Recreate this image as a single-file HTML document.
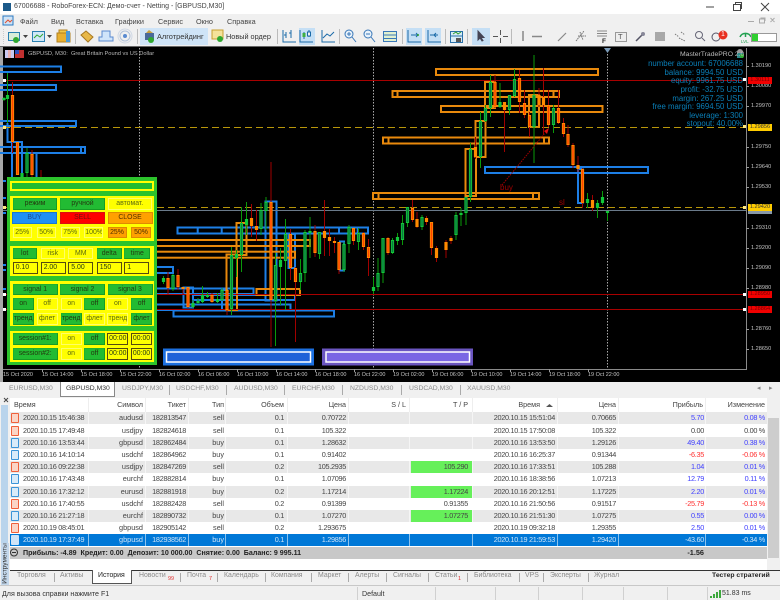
<!DOCTYPE html>
<html><head><meta charset="utf-8"><style>
html,body{margin:0;padding:0;width:780px;height:600px;overflow:hidden;background:#f0f0f0}
#w{position:relative;width:780px;height:600px;overflow:hidden;font:8px "Liberation Sans","Noto Sans CJK SC",sans-serif;color:#333;filter:blur(.35px)}
.a,.t{position:absolute;white-space:nowrap}
.t{line-height:10px}
svg{position:absolute;left:0;top:0}
.m{top:17px;color:#444;font-size:7.3px}
.p{left:751px;color:#c4c4c4;font-size:5.6px;line-height:8px}
.x{color:#c4c4c4;font-size:5.5px;top:371px;line-height:8px}
.tg{left:748px;width:24px;height:7px;font-size:5.6px;line-height:7px;color:#333;text-align:center}
.inf{right:37px;color:#0a7fb8;font-size:7.800px;line-height:9px}
.b{position:absolute;text-align:center;font-size:6.9px;color:#243a10;box-sizing:border-box;white-space:nowrap;overflow:hidden}
.g{background:#22bb33;border:1px solid #1eb02e;border-right-color:#169c25;border-bottom-color:#169c25}
.y{background:#ffff00;border:1px solid #ffff66;color:#5a6a10}
.o{background:#ffa000;border:1px solid #e08a00;color:#503000}
.n{background:#ffff00;border:1px solid #554a10;text-align:left;padding-left:2px}
.s{position:absolute;background:#ffff00}
.tb{top:384px;color:#8a8a8a;font-size:6.8px}
.r{position:absolute;left:10px;width:757px;height:12.2px;line-height:12.2px;font-size:7.3px;letter-spacing:-.3px;color:#444}
.r.e{background:#e8e8e8}.r.w{background:#fff}
.r.z{background:#0078d7;color:#cfe4f7}
.r span{position:absolute;white-space:nowrap}
.r span:nth-of-type(1){left:13px}
.r span:nth-of-type(2){right:624px;letter-spacing:0}
.r span:nth-of-type(3){right:581px}
.r span:nth-of-type(4){right:543px;letter-spacing:0}
.r span:nth-of-type(5){right:483px}
.r span:nth-of-type(6){right:421px}
.r span:nth-of-type(7){left:401px;text-align:right;padding-right:4px;width:57px;height:12.2px}
.r span:nth-of-type(8){right:212px}
.r span:nth-of-type(9){right:151px}
.r span:nth-of-type(10){right:63px;color:#3f3fff}
.r span:nth-of-type(11){right:2px;color:#3f3fff}
.r span.c{color:#444}.r span.h{color:#ff3030}
.r.z span:nth-of-type(n){color:#cfe4f7}
.r span.gr{background:#66f05a}
.r u{position:absolute;left:1px;top:1px;width:8px;height:10px;border:1px solid;box-sizing:border-box;text-decoration:none;border-radius:1px}
.r u.d{border-color:#f0603a;background:#fbd5c6}.r u.l{border-color:#3a94d8;background:#d8ebf9}
.hd{top:400px;color:#444;font-size:7.2px}
.bt{top:571px;color:#8a8a8a;font-size:6.9px}
.sep{position:absolute;width:1px;background:#aaa}
</style></head><body><div id="w">

<!-- title -->
<div class="a" style="left:0;top:0;width:780px;height:14px;background:#fff"></div>
<div class="a" style="left:3px;top:3px;width:8px;height:8px;background:#1c5a8a"></div>
<div class="t" style="left:14px;top:2px;font-size:7px;color:#444">67006688 - RoboForex-ECN: Демо-счет - Netting - [GBPUSD,M30]</div>
<svg width="780" height="46" fill="none" stroke="#444" stroke-width="1">
<path d="M706 7h8"/><path d="M733.500 4.500h7v6h-7zM735.500 4.500v-2h6v6h-1"/><path d="M761 3l8 8M769 3l-8 8"/>
<path d="M748 21.500h6M759.500 19h5v4h-5zM761 19v-1h4v3M770.500 18l4 4M774.500 18l-4 4" stroke="#aaa"/>
<rect x="3" y="16" width="10" height="9" stroke="#2a78c0" fill="#cfe4f7"/><path d="M5 23l3-3 2 2 2-2" stroke="#e05030"/>
<path d="M75.500 29v15M137.500 29v15M277.500 29v15M339.500 29v15M402.500 29v15M445.500 29v15M467.500 29v15M511.500 29v15" stroke="#bbb"/>
<path d="M3.500 29v15" stroke="#ccc" stroke-dasharray="1 1"/>
</svg>
<div class="t m" style="left:20px">Файл</div><div class="t m" style="left:51px">Вид</div><div class="t m" style="left:76px">Вставка</div><div class="t m" style="left:115px">Графики</div><div class="t m" style="left:158px">Сервис</div><div class="t m" style="left:196px">Окно</div><div class="t m" style="left:227px">Справка</div>

<!-- toolbar buttons -->
<div class="a" style="left:140px;top:28px;width:68px;height:17px;background:#cfe4f7"></div>
<div class="a" style="left:299px;top:28px;width:16px;height:17px;background:#c5dff5"></div>
<div class="a" style="left:406px;top:28px;width:16px;height:17px;background:#c5dff5"></div>
<div class="a" style="left:425px;top:28px;width:16px;height:17px;background:#c5dff5"></div>
<div class="a" style="left:472px;top:28px;width:18px;height:17px;background:#c5dff5"></div>
<div class="t" style="left:157px;top:32px;font-size:7.400px;color:#333">Алготрейдинг</div>
<div class="t" style="left:226px;top:32px;font-size:7.300px;color:#333">Новый ордер</div>
<svg width="780" height="46" fill="none" stroke-width="1">
<rect x="8.500" y="32.500" width="11" height="8" fill="#d8ecd8" stroke="#2a80b0"/><circle cx="16" cy="40" r="3" fill="#30a830"/>
<path d="M23 35h5l-2.500 3z" fill="#444"/>
<rect x="32.500" y="31.500" width="12" height="10" fill="#cfe8f8" stroke="#2a80b0"/><path d="M34 38l3-3 3 2 3-3" stroke="#30a830"/>
<path d="M47 35h5l-2.500 3z" fill="#444"/>
<rect x="59" y="30" width="8" height="7" fill="#f0c848" stroke="#b08020"/><rect x="57" y="33" width="13" height="9" fill="#e8b030" stroke="#b08020"/><rect x="66" y="31" width="4" height="11" fill="#4a9ad8"/>
<path d="M81 35l5-4 7 6-5 5z" fill="#e8b848" stroke="#a87820"/>
<path d="M102 37v-6h8v6h3v4h-14v-4z" fill="#cfe4fa" stroke="#5a8ad0"/>
<circle cx="125" cy="36" r="2" fill="#5a8ad0"/><circle cx="125" cy="36" r="5" stroke="#b0c0d8"/><circle cx="125" cy="36" r="7" stroke="#d0d8e4"/>
<rect x="145" y="33" width="9" height="7" fill="#4a6a9a"/><path d="M146 33l3-3 4 3z" fill="#c8a040"/><circle cx="151" cy="40" r="3" fill="#30a830"/>
<rect x="212" y="30" width="11" height="9" fill="#f5e29a" stroke="#c8a030"/><circle cx="220" cy="39" r="3" fill="#30a830"/>
<path d="M283 30v12h13M286 32v6M291 30v8M289 33h2M284 35h2" stroke="#1a6aa8"/>
<path d="M300 30v12h13M304 32v7M309 30v7" stroke="#1a6aa8"/><rect x="302.500" y="33" width="3" height="4" fill="#40b040"/><rect x="307.500" y="32" width="3" height="4" fill="#f0f0f0" stroke="#1a6aa8"/>
<path d="M322 30v12h13M323 38l4-4 3 2 4-4" stroke="#1a6aa8"/>
<circle cx="349" cy="34" r="4" fill="#e8f2fb" stroke="#3a78b8"/><path d="M352 37l4 5M347 34h4M349 32v4" stroke="#3a78b8"/>
<circle cx="368" cy="34" r="4" fill="#e8f2fb" stroke="#3a78b8"/><path d="M371 37l4 5M366 34h4" stroke="#3a78b8"/>
<rect x="383.500" y="31.500" width="13" height="10" fill="#e0f0d0" stroke="#3a78b8"/><path d="M384 35h12M384 38.500h12" stroke="#3a78b8"/>
<path d="M408 30v12h13M411 35h7M416 33l2 2-2 2" stroke="#1a6aa8"/><circle cx="418" cy="35" r="1" fill="#30a030"/>
<path d="M428 30v12h13M430 35h8M436 33l-2 2 2 2" stroke="#1a6aa8"/>
<rect x="450.500" y="31.500" width="12" height="11" fill="#d8ecf8" stroke="#2a70a8"/><path d="M451 36h11" stroke="#2a70a8"/><path d="M453 34l3-2 2 2 3-2" stroke="#30a030"/><rect x="456" y="38" width="5" height="4" fill="#555"/>
<path d="M478 31v9l2-2 2 3 1-.5-2-3h3z" fill="#445" stroke="#445"/>
<path d="M500.500 30v5M500.500 38v5M493 36.500h5M503 36.500h5" stroke="#555"/>
<path d="M523 31v10" stroke="#888" stroke-width="1.500"/><path d="M542 36.500h-10" stroke="#888" stroke-width="1.500"/><path d="M558 41l8-8" stroke="#888" stroke-width="1.200"/>
<path d="M576 41l8-10M578 36l8 0M580 32l3 8" stroke="#777" stroke-dasharray="1.500 .7"/>
<path d="M597 31h10M597 33.500h10M597 36h10" stroke="#888"/>
<rect x="615.500" y="32.500" width="11" height="9" fill="#eee" stroke="#999"/>
<path d="M636 41l6-6" stroke="#556" stroke-width="1.500"/><circle cx="643" cy="34" r="2" fill="#889"/>
<rect x="655" y="32" width="10" height="9" fill="#a8a8a8"/>
<path d="M675 34l4 3M681 32l4 3M679 38l6 3" stroke="#777" stroke-dasharray="1.500 1"/>
<circle cx="699" cy="35" r="3.500" stroke="#667"/><path d="M702 38l3 3" stroke="#667"/>
<circle cx="716" cy="37" r="4" stroke="#556"/><circle cx="723" cy="35" r="4.500" fill="#e83020"/>
<path d="M740 37a6 6 0 0 1 11 0" stroke="#22a050" stroke-width="1.500"/><path d="M745.500 37v-3" stroke="#22a050" stroke-width="1.500"/>
<rect x="751.500" y="33.500" width="25" height="8" fill="#fff" stroke="#999"/><rect x="752" y="34" width="6" height="7" fill="#30d030"/>
</svg>
<div class="t" style="left:721px;top:30px;font-size:7px;color:#fff">1</div>
<div class="t" style="left:741px;top:39px;font-size:4.500px;color:#22a050;line-height:5px">LVL</div>
<div class="t" style="left:602px;top:37px;font-size:6.500px;font-weight:bold;color:#222">F</div>
<div class="t" style="left:618px;top:32px;font-size:7.500px;color:#555">T</div>

<!-- chart -->
<div class="a" style="left:0;top:46px;width:780px;height:336px;background:#000"></div>
<div class="a" style="left:0;top:46px;width:2.500px;height:336px;background:#a8a8a8"></div>
<div class="a" style="left:0;top:46px;width:780px;height:1px;background:#666"></div>
<svg width="780" height="600" fill="none">
<path d="M139.500 48V369M373.500 48V369M607.500 48V369" stroke="#aaa" stroke-dasharray="1.500 1.500"/>
<g stroke="#1d7fe6" stroke-width="2">
<rect x="-5" y="66.500" width="66" height="5.500"/><rect x="-5" y="85" width="61" height="5"/><rect x="-5" y="121" width="81" height="5"/><rect x="-5" y="147" width="90" height="6"/>
<path d="M81 147v6M7.500 123V142H22V177M12 142V177M36.500 153V177M6 181h-3M6 198h-3M6 213h-3M6 265h-3M6 270h-3M6 289h-3"/>
<rect x="177.500" y="227.500" width="190.500" height="6"/><path d="M197.700 227v7M221.700 227v7M339 227v7M357.700 227v7"/>
<rect x="150" y="267" width="23" height="6"/><rect x="173.500" y="310.500" width="160.500" height="6"/><rect x="150" y="304.500" width="140.500" height="5.500"/><rect x="150" y="288.500" width="103.500" height="5.500"/>
<rect x="183.500" y="287.500" width="9.500" height="20"/><rect x="193" y="295" width="102" height="5"/><rect x="265.500" y="201.500" width="11" height="99"/><rect x="288.500" y="234" width="6.500" height="34"/><rect x="340" y="241.500" width="4" height="29"/><rect x="222" y="290" width="5" height="20"/>
<rect x="485" y="167" width="163" height="6"/><rect x="578" y="169" width="4.500" height="34"/>
</g>
<g stroke="#e8890c" stroke-width="2">
<rect x="150" y="240" width="160" height="6"/><rect x="150" y="251.700" width="145" height="6"/><rect x="236.500" y="223" width="10" height="32"/><rect x="226.500" y="254.500" width="10.500" height="55.500"/><rect x="256.500" y="289" width="43.500" height="6"/>
<rect x="373" y="193" width="166" height="6"/><path d="M378.500 193v6M533 193v6M397.500 91v6M553.500 91v6M388.500 137v7M544 137v7"/>
<rect x="436" y="69" width="162" height="6"/><rect x="392.500" y="91" width="166.500" height="6"/><rect x="441" y="106" width="161.500" height="6"/><rect x="383" y="137.500" width="166" height="6"/>
<rect x="485" y="82" width="10" height="26"/><rect x="475.500" y="121" width="10" height="36"/><rect x="465.500" y="149" width="10.500" height="47"/><rect x="529" y="95" width="10" height="32"/>
</g>
<path d="M3 80.500H746M3 294.500H746M3 309.500H746" stroke="#a80000"/>
<path d="M3 127.500H746M3 207.500H746" stroke="#b8960a" stroke-dasharray="7 4"/>
<path d="M3 210.500H746" stroke="#6a7a8a"/>
<path stroke="#0a9a0a" d="M4 97V101M7.500 73V123M22 173V177M27 148V177M163.500 276V284M173 274V291M193 300V308M198 298V304M202.500 286V303M207.500 292V298M217.500 293V303M222 288V301M231.500 247V315M236.500 250V277M241.500 207V272M246.500 202V235M261 203V235M266 197V230M275.500 253V346M280.500 248V305M285.500 219V310M300.500 259V290M305 230V282M310 217V258M319.500 232V259M344 242V272M349 225V253M358.500 228V250M373.500 277V294M378 258V291M383 238V283M392.500 238V254M397.500 233V245M402.500 215V245M407.500 207V227M422 215V230M456 212V240M461 208V226M466 197V225M470.500 143V202M480.500 112V168M485.500 105V122M490.500 75V117M500 83V108M509.500 95V115M514.500 69V97M534 55V163M553.500 105V133M587.500 193V208M597.500 200V218M602.500 191V205M607.500 211V221"/>
<path stroke="#a00000" d="M12.500 82V153M17.500 142V175M32 150V177M41 170V177M168 272V295M178 269V290M183 287V295M188 287V308M212 293V303M227 290V315M251.500 204V237M256.500 210V241M271 162V347M290.500 229V280M295.500 267V342M315 225V257M324.500 200V256M329.500 229V256M334.500 237V253M339 242V274M353.500 228V245M363.500 232V250M368.500 239V276M388 237V255M412.500 200V222M417 212V228M426.500 216V225M431.500 222V255M436.500 246V262M446 240V258M451 236V244M475.500 137V159M495 75V108M504.500 102V152M519.500 70V113M524.500 90V118M529.500 112V137M539 88V107M543.500 68V135M548.500 90V127M558.500 90V124M563.500 118V137M568 125V147M573 143V168M578 156V172M582.500 168V208M592.500 195V211"/>
<path stroke="#12c83a" stroke-width="3.200" d="M4 98V100M7.500 95V99M22 173V177M27 153V173M163.500 278V282M173 275V289M193 303V307M198 301V303M202.500 295V302M207.500 295V297M217.500 299V302M222 290V300M231.500 255V309M236.500 254V258M241.500 223V255M246.500 219V225M261 210V229M266 202V211M275.500 265V301M280.500 260V267M285.500 234V261M300.500 273V282M305 232V273M310 231V233M319.500 232V254M344 244V270M349 227V244M358.500 233V242M373.500 287V291M378 273V287M383 238V273M392.500 240V253M397.500 237V241M402.500 223V240M407.500 207V223M422 217V227M456 215V235M461 213V215M466 197V213M470.500 149V197M480.500 121V157M485.500 108V121M490.500 82V108M500 102V107M509.500 95V110M514.500 79V96M534 95V127M553.500 108V125M587.500 199V203M597.500 203V208M602.500 197V203M607.500 211V213"/>
<path stroke="#0a7a40" stroke-width="1.400" d="M27 154V172M173 276V288M222 291V299M231.500 256V308M241.500 224V254M261 211V228M266 203V210M275.500 266V300M285.500 235V260M300.500 274V281M305 233V272M319.500 233V253M344 245V269M349 228V243M358.500 234V241M378 274V286M383 239V272M392.500 241V252M402.500 224V239M407.500 208V222M422 218V226M456 216V234M466 198V212M470.500 150V196M480.500 122V156M485.500 109V120M490.500 83V107M509.500 96V109M514.500 80V95M534 96V126M553.500 109V124"/>
<path stroke="#ff8a00" stroke-width="3.200" d="M12.500 95V142M17.500 142V175M32 154V175M168 278V288M178 275V287M183 287V289M188 287V307M212 295V302M227 290V310M251.500 218V226M256.500 226V230M271 202V300M290.500 234V268M295.500 268V282M315 231V253M324.500 231V238M329.500 237V241M334.500 241V243M339 242V270M353.500 228V241M363.500 233V247M368.500 247V258M388 238V253M412.500 208V220M417 219V227M426.500 218V222M431.500 222V248M436.500 248V258M446 242V250M451 238V241M475.500 147V157M495 82V107M504.500 102V110M519.500 78V102M524.500 103V115M529.500 115V127M539 95V105M543.500 97V105M548.500 105V125M558.500 108V123M563.500 123V134M568 134V145M573 145V165M578 165V169M582.500 169V203M592.500 200V208"/>
<path stroke="#ff4400" stroke-width="1.400" d="M12.500 96V141M17.500 143V174M32 155V174M168 279V287M178 276V286M188 288V306M212 296V301M227 291V309M271 203V299M290.500 235V267M295.500 269V281M315 232V252M339 243V269M353.500 229V240M363.500 234V246M368.500 248V257M388 239V252M412.500 209V219M431.500 223V247M495 83V106M519.500 79V101M524.500 104V114M529.500 116V126M548.500 106V124M558.500 109V122M563.500 124V133M568 135V144M573 146V164M582.500 170V202"/>
<path d="M502 185L545 133" stroke="#a00000" stroke-dasharray="1.500 1"/>
<path d="M544 131l5-3-2 6z" fill="#e01010"/>
<rect x="163" y="348.500" width="151" height="17" fill="#1b6fe0"/><rect x="166.500" y="352" width="144" height="10" fill="#1f62d8" stroke="#fff" stroke-width="1.500"/>
<rect x="322" y="348.500" width="151" height="17" fill="#6a55c0"/><rect x="326" y="352" width="143.500" height="10" fill="#7a66e4" stroke="#fff" stroke-width="1.500"/>
<path d="M746.500 48V369.500H3" stroke="#8a8a8a"/>
<path d="M746 66.500h3M746 86.500h3M746 106.500h3M746 147.500h3M746 167.500h3M746 187.500h3M746 228.500h3M746 248.500h3M746 268.500h3M746 288.500h3M746 329.500h3M746 349.500h3" stroke="#999"/>
<path d="M42.500 369v3M81.500 369v3M120.500 369v3M159.500 369v3M198.500 369v3M237.500 369v3M276.500 369v3M315.500 369v3M354.500 369v3M393.500 369v3M432.500 369v3M471.500 369v3M510.500 369v3M549.500 369v3M588.500 369v3" stroke="#999"/>
<path d="M604 48h7l-3.500 5z" fill="#7a9ab8"/>
<rect x="743" y="78" width="3" height="3" fill="#fff"/><rect x="743" y="125" width="3" height="3" fill="#ffe880"/><rect x="743" y="206" width="3" height="3" fill="#ffe880"/><rect x="743" y="293" width="3" height="3" fill="#fff"/><rect x="743" y="308" width="3" height="3" fill="#fff"/>
<rect x="3" y="79" width="3" height="3" fill="#fff"/><rect x="3" y="126" width="3" height="3" fill="#ffe880"/><rect x="3" y="206" width="3" height="3" fill="#ffe880"/><rect x="3" y="293" width="3" height="3" fill="#fff"/><rect x="3" y="308" width="3" height="3" fill="#fff"/>
<rect x="5" y="50" width="9" height="8" fill="#c8c8f0"/><rect x="8" y="50" width="3" height="8" fill="#e8b0b0"/><rect x="15" y="50" width="9" height="8" fill="#c03030"/><rect x="15" y="50" width="4" height="4" fill="#3050c0"/>
<circle cx="740" cy="52" r="3" fill="#999"/><rect x="737" y="53" width="6" height="5" fill="#2a8a8a"/><circle cx="742" cy="56" r="2" fill="#30b030"/>
</svg>
<div class="t" style="left:28px;top:49px;color:#b8b8b8;font-size:5.700px">GBPUSD, M30:&nbsp; Great Britain Pound vs US Dollar</div>
<div class="t" style="left:680px;top:50px;color:#bbb;font-size:6.800px">MasterTradePRO 2.0</div>

<div class="t" style="left:500px;top:183px;color:#a00000;font-size:8px">buy</div>
<div class="t" style="left:559px;top:198px;color:#a00000;font-size:8px">sl</div>

<div class="t inf" style="top:59px">number account: 67006688</div>
<div class="t inf" style="top:68px">balance: 9994.50 USD</div>
<div class="t inf" style="top:76px">equity: 9961.75 USD</div>
<div class="t inf" style="top:85px">profit: -32.75 USD</div>
<div class="t inf" style="top:94px">margin: 267.25 USD</div>
<div class="t inf" style="top:102px">free margin: 9694.50 USD</div>
<div class="t inf" style="top:111px">leverage: 1:300</div>
<div class="t inf" style="top:119px">stopout: 40.00%</div>

<!-- price axis -->
<div class="t p" style="top:62px">1.30190</div><div class="t p" style="top:82px">1.30080</div><div class="t p" style="top:102px">1.29970</div><div class="t p" style="top:143px">1.29750</div><div class="t p" style="top:163px">1.29640</div><div class="t p" style="top:183px">1.29530</div><div class="t p" style="top:224px">1.29310</div><div class="t p" style="top:244px">1.29200</div><div class="t p" style="top:264px">1.29090</div><div class="t p" style="top:284px">1.28980</div><div class="t p" style="top:325px">1.28760</div><div class="t p" style="top:345px">1.28650</div>
<div class="a tg" style="top:77px;background:#f00000;color:#700">1.30111</div>
<div class="a tg" style="top:124px;background:#ffcc00">1.29856</div>
<div class="a tg" style="top:211px;background:#8898a8;height:3px"></div>
<div class="a tg" style="top:204px;background:#ffcc00">1.29420</div>
<div class="a tg" style="top:291px;background:#f00000;color:#700">1.28950</div>
<div class="a tg" style="top:306px;background:#f00000;color:#700">1.28864</div>

<!-- time axis -->
<div class="t x" style="left:3px">15 Oct 2020</div><div class="t x" style="left:42px">15 Oct 14:00</div><div class="t x" style="left:81px">15 Oct 18:00</div><div class="t x" style="left:120px">15 Oct 22:00</div><div class="t x" style="left:159px">16 Oct 02:00</div><div class="t x" style="left:198px">16 Oct 06:00</div><div class="t x" style="left:237px">16 Oct 10:00</div><div class="t x" style="left:276px">16 Oct 14:00</div><div class="t x" style="left:315px">16 Oct 18:00</div><div class="t x" style="left:354px">16 Oct 22:00</div><div class="t x" style="left:393px">19 Oct 02:00</div><div class="t x" style="left:432px">19 Oct 06:00</div><div class="t x" style="left:471px">19 Oct 10:00</div><div class="t x" style="left:510px">19 Oct 14:00</div><div class="t x" style="left:549px">19 Oct 18:00</div><div class="t x" style="left:588px">19 Oct 22:00</div>

<!-- panel -->
<div class="a" style="left:7px;top:177px;width:150px;height:188px;background:#2cc32c"></div>
<div class="s" style="left:10px;top:181px;width:144px;height:10px"></div>
<div class="a" style="left:12px;top:183px;width:140px;height:6px;background:#1ebc30"></div>
<div class="s" style="left:10px;top:196px;width:144px;height:45px"></div>
<div class="s" style="left:10px;top:246px;width:144px;height:30px"></div>
<div class="s" style="left:10px;top:281px;width:144px;height:45px"></div>
<div class="s" style="left:10px;top:331px;width:144px;height:31px"></div>

<div class="b g" style="left:12.700px;top:198px;width:44.700px;height:11.500px;line-height:9.500px">режим</div>
<div class="b g" style="left:60px;top:198px;width:45px;height:11.500px;line-height:9.500px">ручной</div>
<div class="b y" style="left:107.500px;top:198px;width:44.500px;height:11.500px;line-height:9.500px">автомат.</div>
<div class="b" style="left:12px;top:212px;width:45px;height:12px;background:#2090f4;border:1px solid #1a78d0;line-height:10px;color:#1a4a90">BUY</div>
<div class="b" style="left:60px;top:212px;width:45px;height:12px;background:#ff0000;border:1px solid #d81010;line-height:10px;color:#701010">SELL</div>
<div class="b o" style="left:107.500px;top:212px;width:45px;height:12px;line-height:10px">CLOSE</div>
<div class="b y" style="left:12.700px;top:227px;width:19px;height:11px;line-height:9px">25%</div>
<div class="b y" style="left:36.700px;top:227px;width:19px;height:11px;line-height:9px">50%</div>
<div class="b y" style="left:60.700px;top:227px;width:19px;height:11px;line-height:9px">75%</div>
<div class="b y" style="left:84.300px;top:227px;width:19px;height:11px;line-height:9px">100%</div>
<div class="b o" style="left:107.500px;top:227px;width:19px;height:11px;line-height:9px">25%</div>
<div class="b o" style="left:131px;top:227px;width:20px;height:11px;line-height:9px">50%</div>

<div class="b g" style="left:12.700px;top:248.300px;width:24px;height:11px;line-height:9px">lot</div>
<div class="b y" style="left:40.700px;top:248.300px;width:24px;height:11px;line-height:9px">risk</div>
<div class="b y" style="left:68.300px;top:248.300px;width:25px;height:11px;line-height:9px">MM</div>
<div class="b g" style="left:96.700px;top:248.300px;width:25px;height:11px;line-height:9px">delta</div>
<div class="b g" style="left:124.300px;top:248.300px;width:26px;height:11px;line-height:9px">time</div>
<div class="b n" style="left:12.700px;top:262.300px;width:25px;height:12px;line-height:10px">0.10</div>
<div class="b n" style="left:40.700px;top:262.300px;width:25px;height:12px;line-height:10px">2.00</div>
<div class="b n" style="left:68.300px;top:262.300px;width:25px;height:12px;line-height:10px">5.00</div>
<div class="b n" style="left:96.700px;top:262.300px;width:25px;height:12px;line-height:10px">150</div>
<div class="b n" style="left:124.300px;top:262.300px;width:25px;height:12px;line-height:10px">1</div>

<div class="b g" style="left:12.700px;top:283.700px;width:45px;height:11px;line-height:9px">signal 1</div>
<div class="b g" style="left:60px;top:283.700px;width:45px;height:11px;line-height:9px">signal 2</div>
<div class="b g" style="left:107.500px;top:283.700px;width:45px;height:11px;line-height:9px">signal 3</div>
<div class="b g" style="left:12.700px;top:298.300px;width:21px;height:12px;line-height:10px">on</div>
<div class="b y" style="left:36.700px;top:298.300px;width:21px;height:12px;line-height:10px">off</div>
<div class="b y" style="left:60.700px;top:298.300px;width:21px;height:12px;line-height:10px">on</div>
<div class="b g" style="left:84px;top:298.300px;width:21px;height:12px;line-height:10px">off</div>
<div class="b y" style="left:107.300px;top:298.300px;width:21px;height:12px;line-height:10px">on</div>
<div class="b g" style="left:131px;top:298.300px;width:21px;height:12px;line-height:10px">off</div>
<div class="b g" style="left:12.700px;top:312.700px;width:21px;height:12px;line-height:10px">тренд</div>
<div class="b y" style="left:36.700px;top:312.700px;width:21px;height:12px;line-height:10px">флет</div>
<div class="b g" style="left:60.700px;top:312.700px;width:21px;height:12px;line-height:10px">тренд</div>
<div class="b y" style="left:84px;top:312.700px;width:21px;height:12px;line-height:10px">флет</div>
<div class="b y" style="left:107.300px;top:312.700px;width:21px;height:12px;line-height:10px">тренд</div>
<div class="b g" style="left:131px;top:312.700px;width:21px;height:12px;line-height:10px">флет</div>

<div class="b g" style="left:12.700px;top:333.300px;width:45px;height:12px;line-height:10px">session#1:</div>
<div class="b y" style="left:60.700px;top:333.300px;width:21px;height:12px;line-height:10px">on</div>
<div class="b g" style="left:84px;top:333.300px;width:21px;height:12px;line-height:10px">off</div>
<div class="b n" style="left:107.300px;top:333.300px;width:21px;height:12px;line-height:10px;padding:0;text-align:center">00:00</div>
<div class="b n" style="left:131px;top:333.300px;width:21px;height:12px;line-height:10px;padding:0;text-align:center">00:00</div>
<div class="b g" style="left:12.700px;top:347.700px;width:45px;height:12px;line-height:10px">session#2:</div>
<div class="b y" style="left:60.700px;top:347.700px;width:21px;height:12px;line-height:10px">on</div>
<div class="b g" style="left:84px;top:347.700px;width:21px;height:12px;line-height:10px">off</div>
<div class="b n" style="left:107.300px;top:347.700px;width:21px;height:12px;line-height:10px;padding:0;text-align:center">00:00</div>
<div class="b n" style="left:131px;top:347.700px;width:21px;height:12px;line-height:10px;padding:0;text-align:center">00:00</div>

<!-- symbol tabs -->
<div class="a" style="left:0;top:382px;width:780px;height:16px;background:#f0f0f0"></div>
<div class="a" style="left:60px;top:382px;width:55px;height:15px;background:#fff;border:1px solid #888;border-top:0;box-sizing:border-box"></div>
<div class="t tb" style="left:9px">EURUSD,M30</div>
<div class="t tb" style="left:66px;color:#333">GBPUSD,M30</div>
<div class="t tb" style="left:122px">USDJPY,M30</div>
<div class="t tb" style="left:176px">USDCHF,M30</div>
<div class="t tb" style="left:234px">AUDUSD,M30</div>
<div class="t tb" style="left:292px">EURCHF,M30</div>
<div class="t tb" style="left:350px">NZDUSD,M30</div>
<div class="t tb" style="left:409px">USDCAD,M30</div>
<div class="t tb" style="left:467px">XAUUSD,M30</div>
<div class="sep" style="left:169px;top:385px;height:10px"></div><div class="sep" style="left:226px;top:385px;height:10px"></div><div class="sep" style="left:284px;top:385px;height:10px"></div><div class="sep" style="left:342px;top:385px;height:10px"></div><div class="sep" style="left:401px;top:385px;height:10px"></div><div class="sep" style="left:460px;top:385px;height:10px"></div>
<div class="t" style="left:757px;top:384px;color:#888;font-size:7px">&#9666;</div><div class="t" style="left:769px;top:384px;color:#888;font-size:7px">&#9656;</div>

<!-- table -->
<div class="a" style="left:10px;top:398px;width:757px;height:172px;background:#fff"></div>
<div class="t hd" style="left:14px">Время</div>
<div class="t hd" style="right:637px">Символ</div>
<div class="t hd" style="right:594px">Тикет</div>
<div class="t hd" style="right:556px">Тип</div>
<div class="t hd" style="right:496px">Объем</div>
<div class="t hd" style="right:434px">Цена</div>
<div class="t hd" style="right:374px">S / L</div>
<div class="t hd" style="right:312px">T / P</div>
<div class="t hd" style="right:240px">Время</div>
<div class="t hd" style="right:164px">Цена</div>
<div class="t hd" style="right:77px">Прибыль</div>
<div class="t hd" style="right:15px">Изменение</div>
<svg width="780" height="420"><path d="M546 407h7l-3.500-3z" fill="#555"/></svg>

<div class="r e" style="top:412.300px"><u class="d"></u><span>2020.10.15 15:46:38</span><span>audusd</span><span>182813547</span><span>sell</span><span>0.1</span><span>0.70722</span><span></span><span>2020.10.15 15:51:04</span><span>0.70665</span><span>5.70</span><span>0.08 %</span></div>
<div class="r w" style="top:424.500px"><u class="d"></u><span>2020.10.15 17:49:48</span><span>usdjpy</span><span>182824618</span><span>sell</span><span>0.1</span><span>105.322</span><span></span><span>2020.10.15 17:50:08</span><span>105.322</span><span class="c">0.00</span><span class="c">0.00 %</span></div>
<div class="r e" style="top:436.700px"><u class="l"></u><span>2020.10.16 13:53:44</span><span>gbpusd</span><span>182862484</span><span>buy</span><span>0.1</span><span>1.28632</span><span></span><span>2020.10.16 13:53:50</span><span>1.29126</span><span>49.40</span><span>0.38 %</span></div>
<div class="r w" style="top:448.900px"><u class="l"></u><span>2020.10.16 14:10:14</span><span>usdchf</span><span>182864962</span><span>buy</span><span>0.1</span><span>0.91402</span><span></span><span>2020.10.16 16:25:37</span><span>0.91344</span><span class="h">-6.35</span><span class="h">-0.06 %</span></div>
<div class="r e" style="top:461.100px"><u class="d"></u><span>2020.10.16 09:22:38</span><span>usdjpy</span><span>182847269</span><span>sell</span><span>0.2</span><span>105.2935</span><span class="gr">105.290</span><span>2020.10.16 17:33:51</span><span>105.288</span><span>1.04</span><span>0.01 %</span></div>
<div class="r w" style="top:473.300px"><u class="l"></u><span>2020.10.16 17:43:48</span><span>eurchf</span><span>182882814</span><span>buy</span><span>0.1</span><span>1.07096</span><span></span><span>2020.10.16 18:38:56</span><span>1.07213</span><span>12.79</span><span>0.11 %</span></div>
<div class="r e" style="top:485.500px"><u class="l"></u><span>2020.10.16 17:32:12</span><span>eurusd</span><span>182881918</span><span>buy</span><span>0.2</span><span>1.17214</span><span class="gr">1.17224</span><span>2020.10.16 20:12:51</span><span>1.17225</span><span>2.20</span><span>0.01 %</span></div>
<div class="r w" style="top:497.700px"><u class="d"></u><span>2020.10.16 17:40:55</span><span>usdchf</span><span>182882428</span><span>sell</span><span>0.2</span><span>0.91399</span><span>0.91355</span><span>2020.10.16 21:50:56</span><span>0.91517</span><span class="h">-25.79</span><span class="h">-0.13 %</span></div>
<div class="r e" style="top:509.900px"><u class="l"></u><span>2020.10.16 21:27:18</span><span>eurchf</span><span>182890732</span><span>buy</span><span>0.1</span><span>1.07270</span><span class="gr">1.07275</span><span>2020.10.16 21:51:30</span><span>1.07275</span><span>0.55</span><span>0.00 %</span></div>
<div class="r w" style="top:522.100px"><u class="d"></u><span>2020.10.19 08:45:01</span><span>gbpusd</span><span>182905142</span><span>sell</span><span>0.2</span><span>1.293675</span><span></span><span>2020.10.19 09:32:18</span><span>1.29355</span><span>2.50</span><span>0.01 %</span></div>
<div class="r z" style="top:534.300px"><u class="l" style="background:#cfe4f7;border-color:#cfe4f7"></u><span>2020.10.19 17:37:49</span><span>gbpusd</span><span>182938562</span><span>buy</span><span>0.1</span><span>1.29856</span><span></span><span>2020.10.19 21:59:53</span><span>1.29420</span><span>-43.60</span><span>-0.34 %</span></div>
<svg width="780" height="600"><path d="M88.500 412v135M145.500 412v135M188.500 412v135M225.500 412v135M287.500 412v135M348.500 412v135M409.500 412v135M472.500 412v135M557.500 412v135M618.500 412v135M705.500 412v135" stroke="#fff" stroke-opacity=".55"/><path d="M88.500 398v14M145.500 398v14M188.500 398v14M225.500 398v14M287.500 398v14M348.500 398v14M409.500 398v14M472.500 398v14M557.500 398v14M618.500 398v14M705.500 398v14" stroke="#eee"/></svg>

<div class="a" style="left:10px;top:546.500px;width:757px;height:12.500px;background:#c8c8c8"></div>
<div class="t" style="left:23px;top:548px;font-size:7.100px;font-weight:bold;color:#222">Прибыль: -4.89&nbsp; Кредит: 0.00&nbsp; Депозит: 10 000.00&nbsp; Снятие: 0.00&nbsp; Баланс: 9 995.11</div>
<div class="t" style="right:76px;top:548px;font-size:7.300px;font-weight:bold;color:#222">-1.56</div>
<svg width="780" height="600" fill="none"><circle cx="14" cy="552.500" r="3.500" stroke="#333"/><path d="M12 552.500h4" stroke="#333"/>
<path d="M4 398l4 4M8 398l-4 4" stroke="#444" stroke-width="1"/>
<path d="M770 406l3-3 3 3M770 564l3 3 3-3" stroke="#555"/></svg>

<!-- left strip -->
<div class="a" style="left:1px;top:405px;width:7px;height:138px;background:#b9d4ec"></div>
<div class="a" style="left:1px;top:543px;width:8px;height:42px;background:#c4d8ec"></div>
<div class="a" style="left:-16px;top:559px;width:42px;height:9px;line-height:9px;font-size:6.500px;color:#333;transform:rotate(-90deg);text-align:center">Инструменты</div>

<!-- scrollbar -->
<div class="a" style="left:767px;top:398px;width:13px;height:172px;background:#f0f0f0"></div>
<div class="a" style="left:768px;top:418px;width:11px;height:140px;background:#cdcdcd"></div>

<!-- bottom tabs -->
<div class="a" style="left:10px;top:569.500px;width:770px;height:1px;background:#333"></div>
<div class="a" style="left:10px;top:570.500px;width:770px;height:14px;background:#f0f0f0"></div>
<div class="a" style="left:92px;top:569.500px;width:40px;height:14.500px;background:#fff;border:1px solid #555;border-top:0;box-sizing:border-box"></div>
<div class="t bt" style="left:17px">Торговля</div><div class="t bt" style="left:60px">Активы</div><div class="t bt" style="left:98px;color:#222;font-weight:normal">История</div><div class="t bt" style="left:139px">Новости</div><div class="t" style="left:168px;top:574px;color:#e03030;font-size:5.500px">99</div><div class="t bt" style="left:187px">Почта</div><div class="t" style="left:209px;top:574px;color:#e03030;font-size:5.500px">7</div><div class="t bt" style="left:224px">Календарь</div><div class="t bt" style="left:271px">Компания</div><div class="t bt" style="left:318px">Маркет</div><div class="t bt" style="left:355px">Алерты</div><div class="t bt" style="left:393px">Сигналы</div><div class="t bt" style="left:435px">Статьи</div><div class="t" style="left:458px;top:574px;color:#e03030;font-size:5.500px">1</div><div class="t bt" style="left:474px">Библиотека</div><div class="t bt" style="left:525px">VPS</div><div class="t bt" style="left:550px">Эксперты</div><div class="t bt" style="left:594px">Журнал</div><div class="t bt" style="left:712px;color:#222;font-weight:bold;font-size:6.800px">Тестер стратегий</div>
<div class="sep" style="left:54px;top:573px;height:9px"></div><div class="sep" style="left:180px;top:573px;height:9px"></div><div class="sep" style="left:217px;top:573px;height:9px"></div><div class="sep" style="left:265px;top:573px;height:9px"></div><div class="sep" style="left:311px;top:573px;height:9px"></div><div class="sep" style="left:348px;top:573px;height:9px"></div><div class="sep" style="left:386px;top:573px;height:9px"></div><div class="sep" style="left:428px;top:573px;height:9px"></div><div class="sep" style="left:467px;top:573px;height:9px"></div><div class="sep" style="left:519px;top:573px;height:9px"></div><div class="sep" style="left:543px;top:573px;height:9px"></div><div class="sep" style="left:588px;top:573px;height:9px"></div>

<!-- status bar -->
<div class="a" style="left:0;top:585px;width:780px;height:1px;background:#c8c8c8"></div>
<div class="t" style="left:2px;top:589px;color:#333;font-size:7.100px">Для вызова справки нажмите F1</div>
<div class="t" style="left:362px;top:589px;color:#333;font-size:7.100px">Default</div>
<div class="t" style="left:722px;top:589px;color:#333;font-size:7px">51.83 ms</div>
<svg width="780" height="600"><path d="M357.500 587v13M435.500 587v13M495.500 587v13M538.500 587v13M582.500 587v13M623.500 587v13M667.500 587v13M707.500 587v13" stroke="#d0d0d0"/>
<path d="M710 596h2v2h-2zM713 594h2v4h-2zM716 592h2v6h-2zM719 590h2v8h-2z" fill="#3ca83c"/></svg>
</div></body></html>
